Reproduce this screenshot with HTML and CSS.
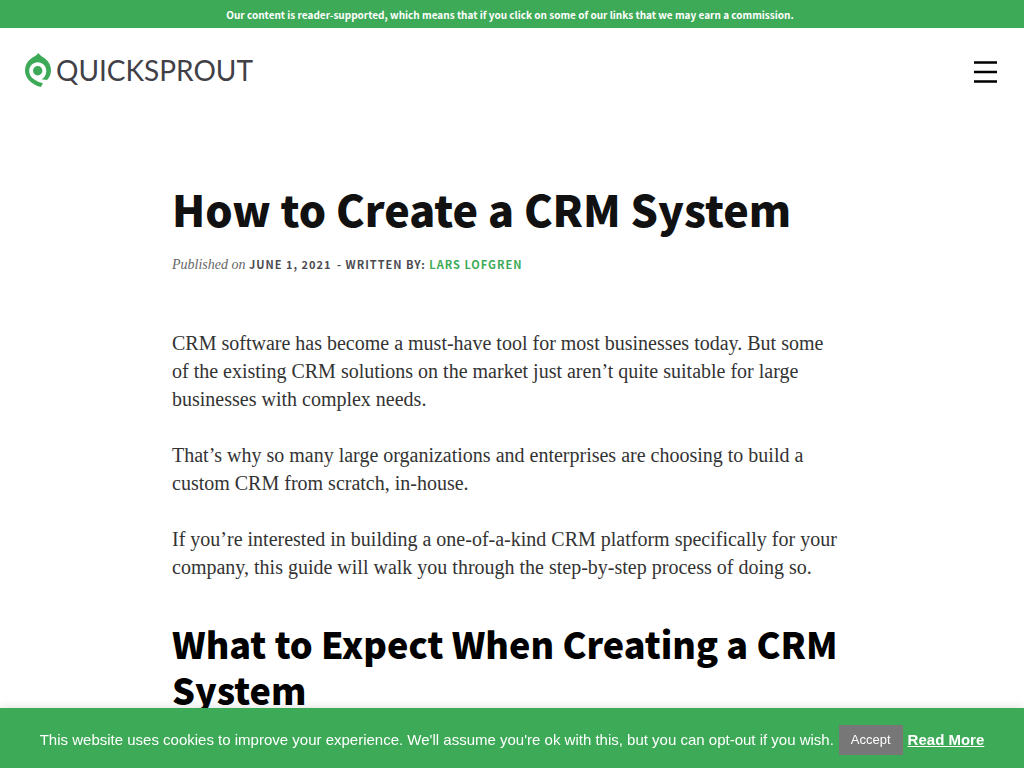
FILE: index.html
```html
<!DOCTYPE html>
<html lang="en">
<head>
<meta charset="utf-8">
<meta name="viewport" content="width=device-width, initial-scale=1">
<title>How to Create a CRM System</title>
<link rel="stylesheet" href="styles.css">
</head>
<body>
<div class="notice">Our content is reader-supported, which means that if you click on some of our links that we may earn a commission.</div>
<header class="site-header">
  <a class="logo" href="#">
    <svg class="logo-mark" viewBox="0 0 26 34" aria-hidden="true">
      <path fill="#3daa57" d="M13.400 0C15 2.500 18 4 20.500 6C24 8.800 26 13 26 17.500C26 21 24.500 24.500 22 27L16.500 26.200C19.500 25 21.300 21.700 21.300 18C21.300 13 17.500 9.300 12.700 9.300C8 9.300 4.200 13 4.200 18C4.200 21.500 6 24.500 9 26.200C11.500 28 14.500 29.500 18 30.300L15.800 34C6.500 31.500 0 25.500 0 17.500C0 13 2 8.800 5.500 6C8.200 4 11.500 2.500 13.400 0Z"/>
      <circle cx="12.700" cy="17.800" r="4.700" fill="#3daa57"/>
    </svg>
    <span class="logo-text">QUICKSPROUT</span>
  </a>
  <button class="menu" aria-label="Menu">
    <svg viewBox="0 0 23 22" aria-hidden="true"><path d="M0 1.500h23M0 11h23M0 20.500h23" stroke="#000" stroke-width="2.400"/></svg>
  </button>
</header>
<main class="article">
  <h1 class="title">How to Create a CRM System</h1>
  <p class="meta"><em class="published">Published on</em> <time datetime="2021-06-01">June 1, 2021</time> <span class="author">- Written by: <a href="#">Lars Lofgren</a></span></p>
  <div class="body">
    <p>CRM software has become a must-have tool for most businesses today. But some<br>of the existing CRM solutions on the market just aren’t quite suitable for large<br>businesses with complex needs.</p>
    <p>That’s why so many large organizations and enterprises are choosing to build a<br>custom CRM from scratch, in-house.</p>
    <p>If you’re interested in building a one-of-a-kind CRM platform specifically for your<br>company, this guide will walk you through the step-by-step process of doing so.</p>
    <h2>What to Expect When Creating a CRM System</h2>
  </div>
</main>
<div class="cookies" role="region" aria-label="Cookie notice">
  <span>This website uses cookies to improve your experience. We'll assume you're ok with this, but you can opt-out if you wish.</span>
  <button class="accept">Accept</button>
  <a href="#">Read More</a>
</div>
</body>
</html>
```
FILE: styles.css
```css
* { box-sizing: border-box; }
html { overflow: hidden; }
body {
  margin: 0;
  background: #fff;
  color: #333;
  font-family: "Liberation Serif", serif;
}
.notice {
  padding: 4px 20px 0 16px;
  min-height: 28px;
  background: #3daa57;
  color: #fff;
  font: 700 10px/22px "Noto Sans CJK SC", sans-serif;
  text-align: center;
}
.site-header {
  display: flex;
  align-items: center;
  justify-content: space-between;
  padding: 25px 27px 25px 25px;
}
.logo {
  display: flex;
  align-items: center;
  gap: 5px;
  color: #414046;
  text-decoration: none;
}
.logo-mark { width: 26px; height: 34px; }
.logo-text { font: 400 28px/34px Lato, sans-serif; }
.menu {
  padding: 4px 0 0;
  border: 0;
  background: none;
}
.menu svg { display: block; width: 23px; height: 22px; }
.article {
  width: 100%;
  max-width: 680px;
  margin: 0 auto;
  padding-top: 69px;
}
.title {
  margin: 0;
  color: #111;
  font: 900 43px/54px "Noto Sans CJK SC", sans-serif;
}
.meta {
  margin: 17px 0 0;
  color: #4a4a50;
  font: 700 11px/24px "Noto Sans CJK SC", sans-serif;
  letter-spacing: 1px;
  text-transform: uppercase;
}
.published {
  color: #666;
  font: italic 400 14px/24px "Liberation Serif", serif;
  letter-spacing: 0;
  text-transform: none;
}
.author { margin-left: 2px; }
.meta a { color: #3daa57; text-decoration: none; }
.body { padding-top: 52px; }
.body p {
  margin: 0 0 28px;
  font-size: 20px;
  line-height: 28px;
}
.body h2 {
  margin: 39px 0 0;
  color: #000;
  font: 900 36px/46px "Noto Sans CJK SC", sans-serif;
}
.cookies {
  position: fixed;
  right: 0;
  bottom: 0;
  left: 0;
  display: flex;
  align-items: center;
  justify-content: center;
  gap: 5px;
  min-height: 60px;
  padding-top: 4px;
  background: #3daa57;
  box-shadow: 0 0 10px rgba(0, 0, 0, 0.15);
  color: #fff;
  font: 15px/20px "Liberation Sans", Arial, sans-serif;
}
.accept {
  padding: 5px 12px;
  border: 0;
  background: #777;
  color: #fff;
  font: 13px/20px "Liberation Sans", Arial, sans-serif;
}
.cookies a { color: #fff; font-weight: 700; }
```
